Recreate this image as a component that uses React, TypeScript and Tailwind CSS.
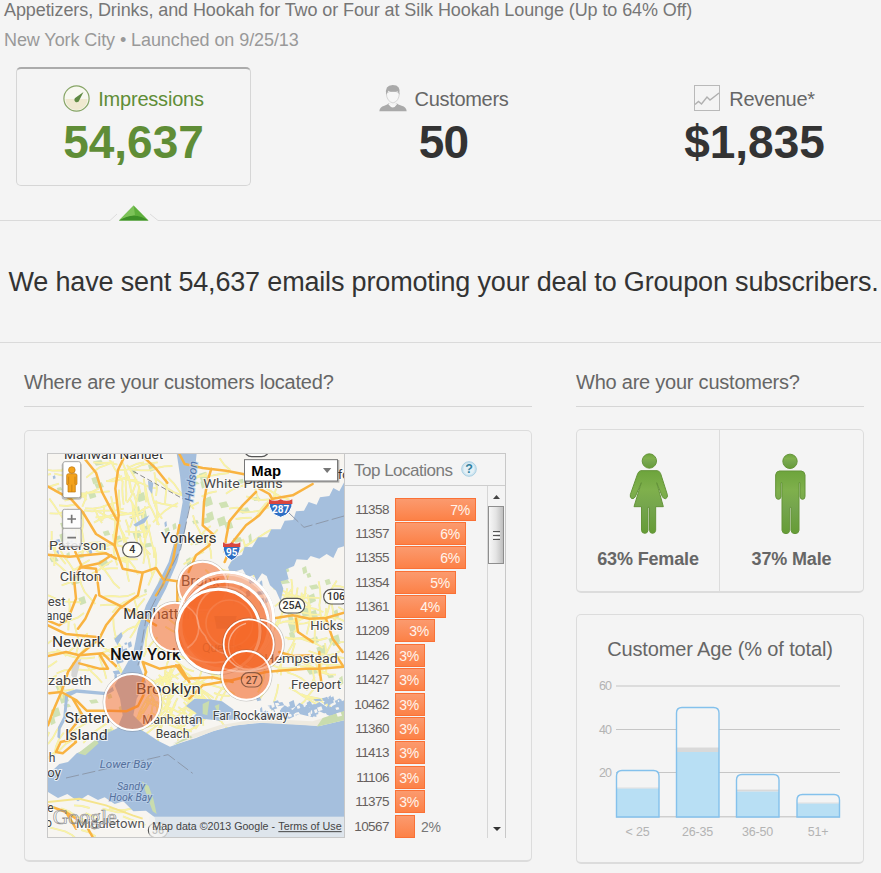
import React from "react";

const locations = [
  { zip: "11358", pct: 7, width: 81 },
  { zip: "11357", pct: 6, width: 71 },
  { zip: "11355", pct: 6, width: 71 },
  { zip: "11354", pct: 5, width: 61 },
  { zip: "11361", pct: 4, width: 51 },
  { zip: "11209", pct: 3, width: 40 },
  { zip: "11426", pct: 3, width: 30 },
  { zip: "11427", pct: 3, width: 30 },
  { zip: "10462", pct: 3, width: 30 },
  { zip: "11360", pct: 3, width: 30 },
  { zip: "11413", pct: 3, width: 30 },
  { zip: "11106", pct: 3, width: 30 },
  { zip: "11375", pct: 3, width: 30 },
  { zip: "10567", pct: 2, width: 20 },
];

const ages = [
  { label: "< 25", x: 0, top: 85, cap: 102.6, fill: 103.6 },
  { label: "26-35", x: 60, top: 22, cap: 62.5, fill: 67 },
  { label: "36-50", x: 120, top: 89, cap: 104.6, fill: 106.6 },
  { label: "51+", x: 180.5, top: 109, cap: 117.6, fill: 118.6 },
];

// Seeded generator so the street texture is the same on every load.
function rng(seed: number) {
  let s = seed;
  return () => {
    s = (s * 16807) % 2147483647;
    return s / 2147483647;
  };
}

function streets(seed: number, count: number, x0: number, y0: number, x1: number, y1: number, tilt: number) {
  const r = rng(seed);
  let d = "";
  for (let i = 0; i < count; i++) {
    let x = x0 + r() * (x1 - x0);
    let y = y0 + r() * (y1 - y0);
    let a = tilt + (r() > 0.5 ? Math.PI / 2 : 0) + (r() - 0.5) * 0.6;
    d += `M${x.toFixed(0)} ${y.toFixed(0)}`;
    const n = 2 + Math.floor(r() * 4);
    for (let k = 0; k < n; k++) {
      a += (r() - 0.5) * 0.6;
      x += Math.cos(a) * 24;
      y += Math.sin(a) * 24;
      d += `L${x.toFixed(0)} ${y.toFixed(0)}`;
    }
  }
  return d;
}

function patches(seed: number, count: number, x0: number, y0: number, x1: number, y1: number, size: number) {
  const r = rng(seed);
  let d = "";
  for (let i = 0; i < count; i++) {
    const x = x0 + r() * (x1 - x0);
    const y = y0 + r() * (y1 - y0);
    const w = size * (0.4 + r());
    const h = size * (0.4 + r());
    d += `M${x.toFixed(0)} ${y.toFixed(0)}l${w.toFixed(0)} ${(-h / 3).toFixed(0)}l${(w / 3).toFixed(0)} ${h.toFixed(0)}l${(-w).toFixed(0)} ${(h / 3).toFixed(0)}z`;
  }
  return d;
}

const yellowRoads =
  streets(11, 50, 10, 10, 400, 300, 1.3) +
  streets(23, 30, 10, 300, 330, 620, 1.2) +
  streets(37, 40, 190, 30, 330, 330, 1.45) +
  streets(41, 24, 430, 10, 700, 320, 1.2) +
  streets(53, 50, 300, 330, 560, 760, 0.5) +
  streets(67, 60, 300, 640, 520, 800, 0.6) +
  streets(71, 60, 640, 380, 890, 740, 0.15) +
  streets(83, 14, 10, 620, 220, 860, 0.9) +
  streets(97, 8, 10, 1050, 250, 1150, 0.4);

type LabelProps = {
  x: number;
  y: number;
  w: number;
  size?: number;
  color?: string;
  bold?: boolean;
  italic?: boolean;
  children: string;
};

function Place({ x, y, w, size = 41, color = "#333", bold, italic, children }: LabelProps) {
  return (
    <text
      x={x}
      y={y}
      fontSize={size * 1.07}
      fill={color}
      stroke={italic ? "#b9cfea" : "#fff"}
      strokeWidth={6}
      strokeOpacity={0.75}
      paintOrder="stroke"
      textLength={w}
      lengthAdjust="spacingAndGlyphs"
      fontWeight={bold ? 500 : 400}
      fontStyle={italic ? "italic" : "normal"}
    >
      {children}
    </text>
  );
}

function Route({ x, y, w, children }: { x: number; y: number; w: number; children: string }) {
  return (
    <g>
      <rect x={x - w / 2} y={y - 22} width={w} height={44} rx={22} fill="#fff" fillOpacity={0.85} stroke="#555" strokeWidth={3.5} />
      <text x={x} y={y + 11} fontSize={32} fill="#333" fontWeight={500} textAnchor="middle">{children}</text>
    </g>
  );
}

function Interstate({ x, y, w, children }: { x: number; y: number; w: number; children: string }) {
  const h = w / 2;
  return (
    <g>
      <path d={`M${x - h} ${y - 22}Q${x - h - 1} ${y + 18} ${x} ${y + 28}Q${x + h + 1} ${y + 18} ${x + h} ${y - 22}Z`} fill="#2f6fc4" stroke="#fff" strokeWidth={3} />
      <path d={`M${x - h} ${y - 12}V${y - 26}Q${x - h / 2} ${y - 17} ${x} ${y - 26}Q${x + h / 2} ${y - 17} ${x + h} ${y - 26}V${y - 12}Z`} fill="#d9463e" />
      <text x={x} y={y + 14} fontSize={30} fontWeight={700} fill="#fff" textAnchor="middle">{children}</text>
    </g>
  );
}

function Bubble({ x, y, r, o, s = 6, so = 1 }: { x: number; y: number; r: number; o: number; s?: number; so?: number }) {
  return (
    <g>
      <circle cx={x} cy={y} r={r + 4} fill="none" stroke="#555" strokeOpacity={0.28 * so} strokeWidth={3} />
      <circle cx={x} cy={y} r={r} fill="#f4692a" fillOpacity={o} stroke="#fff" strokeOpacity={so} strokeWidth={s} />
    </g>
  );
}

function CityMap() {
  return (
    <svg width="296" height="383" viewBox="6 6 888 1149" fontFamily="Roboto, sans-serif" className="block shrink-0">
      <rect x="6" y="6" width="888" height="1149" fill="#f7f5f1" />
      <path d={patches(5, 30, 10, 10, 380, 480, 18) + patches(9, 24, 700, 320, 880, 680, 20) + patches(15, 20, 420, 60, 620, 330, 18) + patches(19, 14, 10, 700, 240, 900, 18)} fill="#d0e2b4" />
      <path d={patches(77, 8, 20, 40, 360, 300, 12)} fill="#a5bfdd" />
      <path d={yellowRoads} fill="none" stroke="#e9e4b4" strokeWidth="5.5" strokeLinejoin="round" />
      <path d={yellowRoads} fill="none" stroke="#faf4a4" strokeWidth="4" strokeLinejoin="round" />

      <g fill="#a5bfdd">
        <path d="M896 88L880 118L862 108L850 132L822 136L812 158L788 150L774 176L750 178L742 204L716 206L704 232L676 232L664 256L636 256L618 286L596 284L588 308L562 318L546 346L552 362L590 352L604 376L624 368L632 388L648 364L662 372L672 400L690 416L704 448L712 410L704 388L728 382L720 352L744 342L752 322L784 324L794 312L820 320L842 306L862 318L876 288L896 282Z" />
        <path d="M392 4L452 4L446 60L432 150L418 230L394 330L360 410L328 470L302 530L288 600L280 640L300 690L272 740L262 790L300 828L214 828L230 790L222 740L206 700L240 640L262 600L276 530L300 460L338 390L368 330L396 230L410 150L402 70Z" />
        <path d="M6 968L40 936L66 930L92 904L128 890L152 862L182 844L220 826L262 820L300 842L336 866L372 884L404 872L450 858L500 838L570 820L650 812L730 815L820 822L896 804V1156H336L326 1096L300 1076L262 1078L232 1048L206 1056L176 1036L156 1044L126 1028L96 1048L64 1026L36 1038L6 1020Z" />
        <path d="M420 762L446 740L490 742L528 748L560 770L590 800L520 806L470 800L444 824L424 812L452 784Z" />
        <path d="M640 790L668 776L690 788L716 760L740 774L760 752L790 768L820 750L846 768L896 744V786L860 796L820 778L800 796L760 786L730 800L690 794L650 806Z" />
        <path d={patches(31, 46, 630, 735, 890, 790, 15) + patches(29, 12, 200, 560, 250, 680, 14) + patches(45, 10, 560, 380, 660, 450, 14)} />
        <path d="M58 722L90 712L180 720L200 704L204 716L180 730L92 722L66 736L60 800L44 830L42 860L34 856L36 826L52 794Z" />
        <path d="M262 218L290 200L310 190L296 212L270 224ZM306 86L322 92L318 126L308 112ZM206 560L226 540L230 552L214 580Z" />
      </g>
      <path d="M380 874L440 846L520 820L640 800L800 808L896 778V796L820 822L640 812L540 824L400 874Z" fill="#eeeae0" />
      <path d="M812 824L830 798L896 776V804ZM380 880L430 850L440 856ZM288 988L308 1002L322 1040L332 1086L320 1078L306 1040ZM96 904L150 862L158 874L118 910ZM470 756L490 746L484 790L470 786ZM506 762L520 756L518 786Z" fill="#c9dcae" />
      <path d={patches(64, 26, 630, 745, 880, 790, 10)} fill="#f7f5f1" />
      <path d="M78 632L106 620L88 690L76 670Z" fill="#d5d5d5" />

      <g fill="none" stroke="#f9b341" strokeWidth="7.5" strokeLinejoin="round" strokeLinecap="round">
        <path d="M116 20L150 62L168 120L194 170L214 206M232 20L216 54L208 110L218 190L206 280L230 350L290 362L330 348L352 382L394 388V450" />
        <path d="M6 104L76 142L110 180L150 246L206 280M6 308L70 314L180 304L210 320M196 310L160 334L104 346" />
        <path d="M298 20L330 50L364 92M400 220L380 330L350 400L330 430" />
        <path d="M400 6L416 36L470 48L540 56L610 70M496 50L484 90L474 150L470 220L500 246L490 280L450 310L428 360" />
        <path d="M630 120L590 160L550 208L540 260L536 300M800 96L740 130L680 140L640 190L600 220L560 270L536 330M640 110L670 126L690 160" />
        <path d="M88 300L106 340L84 380L90 440L66 500L40 520L6 506M104 346L150 350L160 430L186 444L240 470L296 500L330 520M150 430L118 500L96 530" />
        <path d="M290 362L276 430L220 470L180 520L160 560L100 610L66 660L46 720L20 780L6 820" />
        <path d="M6 520L60 546L120 552L160 556M6 612L60 600L100 610L170 604L210 642M160 606L186 650L160 650L100 634" />
        <path d="M10 724L46 720L90 744L122 776L190 776L240 778L276 762L292 730L290 690L300 660M80 740L110 790L70 840L90 870L50 904L30 900L44 870L80 862" />
        <path d="M300 660L290 630L340 650L400 640L430 690M390 640L420 680L500 676L560 690M430 740L470 700L560 684L660 660L700 656L780 650L820 650L894 644" />
        <path d="M690 498L740 490L790 500L840 498L894 482M700 600L740 612L800 610M840 500L860 560L890 600M750 500L756 540L800 570M820 600V650L826 690M870 610L890 640" />
        <path d="M6 1060L60 1080L120 1120L140 1155M60 1080L90 1130" />
      </g>
      <path d="M6 1050L100 1040L180 1060L260 1090L290 1100" fill="none" stroke="#f5e48c" strokeWidth="6" />
      <path d="M60 978L366 908L440 964M728 182L774 226L894 192M432 160L404 290L300 500L276 640" fill="none" stroke="#8d99ab" strokeWidth="3" strokeDasharray="40 10" />
      <path d="M262 58L410 140" fill="none" stroke="#777" strokeWidth="2.5" strokeDasharray="16 8" />

      <Place x={54} y={20} w={298} size={36}>Mahwah Nanuet</Place>
      <Place x={472} y={108} w={238} size={37} color="#4a4a4a">White Plains</Place>
      <g transform="rotate(-83 440 150)">
        <Place x={440} y={150} w={122} size={33} color="#4a70a8" italic>Hudson</Place>
      </g>
      <Place x={344} y={272} w={168}>Yonkers</Place>
      <Place x={9} y={294} w={172} size={37} color="#444">Paterson</Place>
      <Place x={41} y={388} w={126} size={38} color="#444">Clifton</Place>
      <Place x={5} y={462} w={54} size={36} color="#444">est</Place>
      <Place x={0} y={505} w={78} size={36} color="#444">ange</Place>
      <Place x={18} y={586} w={158} size={41}>Newark</Place>
      <Place x={232} y={501} w={214} size={42}>Manhattan</Place>
      <Place x={192} y={623} w={212} size={44} color="#111" bold>New York</Place>
      <Place x={6} y={699} w={130} size={36} color="#444">zabeth</Place>
      <Place x={270} y={726} w={194} size={42}>Brooklyn</Place>
      <Place x={56} y={814} w={136} size={41}>Staten</Place>
      <Place x={57} y={864} w={128} size={41}>Island</Place>
      <Place x={289} y={816} w={180} size={35} color="#444">Manhattan</Place>
      <Place x={329} y={858} w={101} size={35} color="#444">Beach</Place>
      <Place x={500} y={804} w={227} size={35} color="#444">Far Rockaway</Place>
      <Place x={735} y={710} w={150} size={38} color="#444">Freeport</Place>
      <Place x={655} y={634} w={220} size={37} color="#444">Hempstead</Place>
      <Place x={793} y={533} w={98} size={37} color="#444">Hicks</Place>
      <Place x={876} y={80} w={66} size={37}>ford</Place>
      <Place x={405} y={402} w={116} size={39} color="#444">Bronx</Place>
      <Place x={8} y={930} w={20} size={38} color="#444">h</Place>
      <Place x={4} y={976} w={41} size={37} color="#444">oy</Place>
      <Place x={4} y={1080} w={19} size={36} color="#444">e</Place>
      <Place x={-2} y={1124} w={20} size={36} color="#444">o</Place>
      <Place x={161} y={949} w={156} size={31} color="#55709c" italic>Lower Bay</Place>
      <Place x={213} y={1014} w={84} size={31} color="#55709c" italic>Sandy</Place>
      <Place x={189} y={1047} w={129} size={31} color="#55709c" italic>Hook Bay</Place>
      <Place x={90} y={1129} w={206} size={35} color="#555">Middletown</Place>
      <Route x={259} y={293} w={58}>4</Route>
      <Route x={738} y={461} w={76}>25A</Route>
      <Route x={870} y={434} w={74}>106</Route>
      <Route x={632} y={-8} w={74}>22</Route>
      <Route x={336} y={1135} w={58}>36</Route>
      <Interstate x={704} y={168} w={70}>287</Interstate>
      <Interstate x={557} y={297} w={52}>95</Interstate>

      <Bubble x={387} y={525} r={73} o={0.55} />
      <Bubble x={470} y={402} r={73} o={0.55} />
      <Bubble x={541} y={502} r={142} o={0.4} s={9} />
      <circle cx="541" cy="502" r="134" fill="none" stroke="#fff" strokeOpacity="0.35" strokeWidth="5" />
      <Bubble x={536} y={520} r={132} o={0.55} s={9} />
      <Bubble x={637} y={577} r={74} o={0.55} s={5} />
      <g transform="translate(517 537)">
        <circle r="131" fill="none" stroke="#555" strokeOpacity="0.3" strokeWidth="3" />
        <circle r="125" fill="#f56a2c" fillOpacity="0.9" stroke="#fff" strokeWidth="9" />
      </g>
      <g fill="none" stroke="#fff" strokeOpacity="0.22" strokeWidth="5">
        <path d="M424 464A73 73 0 0 1 424 588" />
        <path d="M600 430A84 84 0 0 0 478 552A84 84 0 0 0 540 606" />
        <circle cx="550" cy="514" r="70" strokeOpacity="0.1" />
        <path d="M404 590C450 650 580 650 640 560" strokeOpacity="0.15" />
      </g>
      <path d="M505 492H572L562 530H512Z" fill="#d65c28" fillOpacity="0.3" />
      <text x="468" y="600" fontSize="38" fill="#a03c10" fillOpacity="0.22" textLength="120">Queens</text>
      <Bubble x={608} y={577} r={75} o={0.75} s={5} />
      <path d="M590 646A70 70 0 0 1 600 514" fill="none" stroke="#fff" strokeOpacity="0.45" strokeWidth="4" />
      <Bubble x={601} y={670} r={73} o={0.6} />
      <path d="M532 650Q600 672 668 640" fill="none" stroke="#fff" strokeOpacity="0.3" strokeWidth="5" />
      <g opacity="0.75">
        <rect x="586" y="662" width="62" height="43" rx="21" fill="#f6a47e" stroke="#6a4634" strokeWidth="3.5" />
        <text x="617" y="695" fontSize="31" fill="#4a2b1b" fontWeight="500" textAnchor="middle">27</text>
      </g>
      <Bubble x={259} y={750} r={84} o={0.5} />

      <rect x="310" y="1094" width="586" height="64" fill="#f2f2f0" fillOpacity="0.75" />
      <text x="20" y="1117" fontSize="64" fontFamily="Liberation Serif, serif" fill="#fff" fillOpacity="0.55" stroke="#777" strokeOpacity="0.8" strokeWidth="2.2" textLength="192" lengthAdjust="spacingAndGlyphs">Google</text>
      <g fontFamily="Liberation Sans, Arial, sans-serif" fontSize="32" fill="#444">
        <text x="319" y="1134" textLength="368" lengthAdjust="spacingAndGlyphs">Map data ©2013 Google -</text>
        <text x="697" y="1134" textLength="190" lengthAdjust="spacingAndGlyphs">Terms of Use</text>
        <path d="M697 1139H887" stroke="#444" strokeWidth="3" />
      </g>

      <g>
        <rect x="47" y="32" width="60" height="111" rx="8" fill="#000" fillOpacity="0.22" />
        <rect x="51" y="29" width="53" height="108" rx="6" fill="#fff" stroke="#999" strokeWidth="2.5" />
        <path d="M62 70Q62 65 68 65H87Q93 65 93 70V96Q92 100 88 98V120H66V98Q62 100 62 96Z" fill="#f3a21b" stroke="#b97410" strokeWidth="2" />
        <path d="M77.500 98V120M68 74V96M87 74V96" stroke="#c47f14" strokeWidth="2.500" />
        <circle cx="77.500" cy="54" r="10" fill="#f3a21b" stroke="#b97410" strokeWidth="2" />
        <rect x="47" y="174" width="60" height="113" rx="6" fill="#000" fillOpacity="0.16" />
        <rect x="50" y="172" width="55" height="57" rx="5" fill="#fdfdfd" stroke="#999" strokeWidth="2.500" />
        <rect x="50" y="229" width="55" height="54" rx="5" fill="#fdfdfd" fillOpacity="0.85" stroke="#999" strokeWidth="2.500" />
        <path d="M64 201H90M77 188V214M64 257H90" stroke="#777" strokeWidth="5" />
      </g>
      <g>
        <rect x="594" y="24" width="286" height="68" fill="#000" fillOpacity="0.28" />
        <rect x="595.500" y="23" width="279" height="64" fill="#fff" stroke="#777" strokeWidth="3" />
        <text x="616" y="71" fontSize="42" fontWeight="700" fontFamily="Liberation Sans, Arial, sans-serif" fill="#000" textLength="89" lengthAdjust="spacingAndGlyphs">Map</text>
        <path d="M831 48H856L843.500 63Z" fill="#777" />
      </g>
    </svg>
  );
}

function TopLocations() {
  return (
    <div className="flex flex-1 flex-col border-l border-[#c8c8c8]">
      <div className="flex h-[32px] items-center border-b border-[#cdcdcd] pl-[9px]">
        <span className="pt-[2px] text-[17px] leading-none tracking-[-0.5px] text-[#7b7b7b]">Top Locations</span>
        <svg className="ml-[9px]" width="16" height="16" viewBox="0 0 16 16">
          <circle cx="8" cy="8" r="7.300" fill="#cfe5f0" stroke="#a9cfe2" />
          <circle cx="8" cy="8" r="5.500" fill="#e4f0f6" />
          <text x="8" y="12.300" fontSize="12.500" fontWeight="700" fill="#31809e" textAnchor="middle">?</text>
        </svg>
      </div>
      <div className="flex flex-1">
        <div className="-mb-[1px] flex-1 pt-[11.6px]">
          {locations.map((l) => (
            <div key={l.zip} className="flex h-[24.4px] items-start">
              <span className="w-[44px] text-right text-[13.5px] leading-[24.8px] tracking-[-0.55px] text-[#66615e]">{l.zip}</span>
              <div
                style={{ width: l.width }}
                className="ml-[6px] flex h-[23px] shrink-0 items-center justify-end border border-[#fa7136] bg-linear-to-b from-[#fb9a6e] to-[#fc8146] pr-[5px]"
              >
                {l.pct > 2 && <span className="pt-px text-[14px] leading-none tracking-[-0.3px] text-[#fff4ec]">{l.pct}%</span>}
              </div>
              {l.pct === 2 && <span className="ml-[6px] text-[14px] leading-[25px] tracking-[-0.3px] text-[#777]">2%</span>}
            </div>
          ))}
        </div>
        <div className="flex w-[18px] flex-col items-center border-l border-[#d6d6d6]">
          <div className="flex h-[20.500px] items-center pt-px">
            <svg width="7" height="4" viewBox="0 0 7 4"><path d="M0 4L3.500 0L7 4Z" fill="#444" /></svg>
          </div>
          <div className="flex h-[58px] w-[16px] flex-col items-center justify-center gap-[1px] self-start border border-[#8e8e8e] bg-linear-to-r from-[#f7f7f7] via-[#e4e4e4] to-[#bfbfbf]">
            <div className="h-px w-[7px] bg-[#555]" />
            <div className="h-px w-[7px] bg-white" />
            <div className="h-px w-[7px] bg-[#555]" />
            <div className="h-px w-[7px] bg-white" />
            <div className="h-px w-[7px] bg-[#555]" />
          </div>
          <div className="mt-auto flex h-[19px] items-center">
            <svg width="8" height="4" viewBox="0 0 8 4"><path d="M0 0H8L4 4Z" fill="#333" /></svg>
          </div>
        </div>
      </div>
    </div>
  );
}

function FemaleIcon() {
  return (
    <svg className="ml-[2px]" width="42" height="84" viewBox="189 96 126 252">
      <defs>
        <linearGradient id="body" x1="0" y1="0" x2="0" y2="1">
          <stop offset="0" stopColor="#6da43c" />
          <stop offset="0.3" stopColor="#7fb04c" />
          <stop offset="0.6" stopColor="#74a44d" />
          <stop offset="1" stopColor="#659c35" />
        </linearGradient>
      </defs>
      <g fill="url(#body)" stroke="#649439" strokeWidth="3" strokeLinejoin="round">
        <circle cx="253" cy="123" r="21.500" />
        <path d="M228 152H277Q284 153 287 161L307 224Q309 233 302 236Q295 236 292 230L275 188L295 260H272V331Q271 340 262.500 340Q254 340 253.500 331V262H249V331Q248 340 239.500 340Q230 340 229.500 331V260H207L229 188L211 230Q208 236 201 236Q194 233 196 224L218 161Q221 153 228 152Z" />
      </g>
    </svg>
  );
}

function MaleIcon() {
  return (
    <svg className="mr-[3px]" width="42" height="84" viewBox="612 96 126 252">
      <g fill="url(#body)" stroke="#649439" strokeWidth="3" strokeLinejoin="round">
        <circle cx="675" cy="124" r="21.500" />
        <path d="M643 153H709Q719 154 720 165V229Q720 238 713 238Q706 238 705 230V188H702V331Q701 341 690 341Q679 341 678 331V262H674V331Q673 341 663 341Q652 341 651 331V188H648V230Q647 238 640 238Q633 238 632 229V165Q633 154 643 153Z" />
      </g>
    </svg>
  );
}

function AgeChart() {
  return (
    <svg className="block overflow-visible" width="264" height="160" viewBox="-22 0 264 160" fontSize="12.5" fill="#b3b3b3">
      <rect x="0" y="0" width="224" height="2" fill="#dcdcdc" />
      <rect x="0" y="44" width="224" height="1" fill="#c6c6c6" />
      <rect x="0" y="87" width="224" height="1" fill="#c6c6c6" />
      <rect x="0" y="131" width="224" height="1.500" fill="#cfcfcf" />
      <text x="-17" y="5" textLength="13">60</text>
      <text x="-17" y="49" textLength="13">40</text>
      <text x="-17" y="92" textLength="13">20</text>
      {ages.map((a) => (
        <g key={a.label}>
          <path d={`M${a.x + 0.5} 132V${a.top + 6}Q${a.x + 0.5} ${a.top + 0.5} ${a.x + 6} ${a.top + 0.5}H${a.x + 37.5}Q${a.x + 43} ${a.top + 0.5} ${a.x + 43} ${a.top + 6}V132Z`} fill="#f4f4f4" />
          <rect x={a.x + 0.5} y={a.cap} width={42.5} height={a.fill - a.cap} fill="#d9d9d9" />
          <rect x={a.x + 0.5} y={a.fill} width={42.5} height={132 - a.fill} fill="#b8dff4" />
          <path d={`M${a.x + 0.5} 132V${a.top + 6}Q${a.x + 0.5} ${a.top + 0.5} ${a.x + 6} ${a.top + 0.5}H${a.x + 37.5}Q${a.x + 43} ${a.top + 0.5} ${a.x + 43} ${a.top + 6}V132Z`} fill="none" stroke="#84c1ec" strokeWidth="1.400" />
          <text x={a.x + 21.5} y="151" textAnchor="middle" letterSpacing="-0.2">{a.label}</text>
        </g>
      ))}
    </svg>
  );
}

export default function App() {
  return (
    <div className="flex h-[873px] w-[881px] flex-col overflow-hidden bg-[#f4f4f4] font-['Liberation_Sans',Arial,sans-serif] whitespace-nowrap">
      <header className="h-[67px] pl-[4px] text-[18px]">
        <h1 className="h-[20px] leading-[20px] tracking-[-0.09px] text-[#767676]">
          Appetizers, Drinks, and Hookah for Two or Four at Silk Hookah Lounge (Up to 64% Off)
        </h1>
        <p className="mt-[10px] h-[20px] leading-[20px] tracking-[-0.08px] text-[#999]">New York City • Launched on 9/25/13</p>
      </header>

      <nav className="flex h-[119px] gap-[75px] pl-[16px]">
        <div className="flex w-[235px] flex-col items-center rounded-[5px] border border-t-2 border-[#d6d6d6] border-t-[#ababab] pt-[15px]">
          <div className="flex h-[28px] items-center gap-[8px]">
            <svg width="27" height="27" viewBox="0 0 27 27">
              <circle cx="13.500" cy="13.500" r="12.600" fill="#f7f8f0" stroke="#87a566" strokeWidth="1.200" />
              <path d="M2.500 14H24.500A11 11 0 0 1 2.500 14Z" fill="#efe9d0" />
              <path d="M20.500 7L16.300 15.300A2.500 2.500 0 1 1 12.800 12.500Z" fill="#5f8a43" />
            </svg>
            <span className="pt-[2px] text-[20px] leading-none tracking-[-0.2px] text-[#5f8d36]">Impressions</span>
          </div>
          <strong className="mt-[7px] text-[46px] leading-[46px] text-[#5f8d36]">54,637</strong>
        </div>
        <div className="flex w-[235px] flex-col items-center pt-[17px]">
          <div className="flex h-[28px] items-center gap-[8px]">
            <svg width="28" height="28" viewBox="0 0 84 84">
              <path d="M1 82Q2 68 16 65Q26 62 30 57Q40 78 52 57Q56 62 68 65Q82 68 83 82Z" fill="#a9a9a9" />
              <path d="M30 57Q41 74 52 57L54 61Q42 80 28 61Z" fill="#f8f8f8" />
              <path d="M22 28Q23 52 42 57Q60 52 61 28Q42 14 22 28Z" fill="#f6f6f6" stroke="#c4c4c4" strokeWidth="2" />
              <path d="M22 32Q16 4 41 3Q67 3 61 32L56 22Q40 26 28 20Z" fill="#a9a9a9" />
            </svg>
            <span className="pt-[2px] text-[20px] leading-none tracking-[-0.3px] text-[#666]">Customers</span>
          </div>
          <strong className="mt-[7px] text-[46px] leading-[46px] tracking-[-0.8px] text-[#333]">50</strong>
        </div>
        <div className="ml-px flex w-[235px] flex-col items-center pt-[17px]">
          <div className="flex h-[28px] items-center gap-[9px]">
            <svg width="26" height="26" viewBox="0 0 26 26" fill="none">
              <rect x="0.500" y="0.500" width="25" height="25" stroke="#b9b9b9" />
              <path d="M1 19.500L4.500 16.500L7.500 19L13 12L16 15L25 8" stroke="#b0b0b0" strokeWidth="1.400" />
            </svg>
            <span className="pt-[2px] text-[20px] leading-none tracking-[-0.3px] text-[#666]">Revenue*</span>
          </div>
          <strong className="mt-[7px] text-[46px] leading-[46px] text-[#333]">$1,835</strong>
        </div>
      </nav>

      <div className="flex h-[35px] items-end">
        <div className="h-px w-[110px] bg-[#dadada]" />
        <svg className="block" width="48" height="16" viewBox="0 0 48 16">
          <path d="M0 15.500L7 9M48 15.500L40 9" stroke="#dcdcdc" />
          <path d="M23.700 0.500L38.500 15.500H9Z" fill="#5eaf3c" />
          <path d="M23.700 0.500L25 10Q16 12 9 15.500Z" fill="#7cc258" />
          <path d="M9 15.500Q24 6 38.500 15.500Z" fill="#3d8f27" />
        </svg>
        <div className="h-px flex-1 bg-[#dadada]" />
      </div>

      <div className="flex h-[122px] items-center border-b border-[#dadada] pt-[2px] pl-[8.500px]">
        <h2 className="text-[27px] leading-none tracking-[-0.17px] text-[#333]">
          We have sent 54,637 emails promoting your deal to Groupon subscribers.
        </h2>
      </div>

      <main className="flex gap-[44px] pl-[24px]">
        <section className="w-[508px]">
          <h3 className="flex h-[64px] items-end border-b border-[#d6d6d6] pb-[13px] text-[20px] leading-[22px] tracking-[-0.22px] text-[#666]">
            Where are your customers located?
          </h3>
          <div className="mt-[23px] h-[432px] rounded-[5px] border border-b-2 border-[#dcdcdc] pt-[22px] pl-[22px]">
            <div className="flex h-[385px] w-[459px] border border-b-0 border-[#c8c8c8]">
              <div className="border-b-2 border-[#c8c8c8]">
                <CityMap />
              </div>
              <TopLocations />
            </div>
          </div>
        </section>

        <section className="w-[288px]">
          <h3 className="flex h-[64px] items-end border-b border-[#d6d6d6] pb-[13px] text-[20px] leading-[22px] tracking-[-0.23px] text-[#666]">
            Who are your customers?
          </h3>
          <div className="mt-[22px] flex h-[164px] rounded-[5px] border border-b-2 border-[#dcdcdc] text-[18px] font-bold tracking-[-0.15px] text-[#666]">
            <div className="flex w-[143px] flex-col items-center border-r border-[#dcdcdc] pt-[22px]">
              <FemaleIcon />
              <span className="mt-[13px] leading-[20px]">63% Female</span>
            </div>
            <div className="flex flex-1 flex-col items-center pt-[22px]">
              <MaleIcon />
              <span className="mt-[13px] leading-[20px]">37% Male</span>
            </div>
          </div>
          <div className="mt-[21px] h-[250px] rounded-[5px] border border-b-2 border-[#dcdcdc]">
            <h4 className="mt-[23px] text-center text-[20px] leading-[22px] tracking-[-0.13px] text-[#666]">Customer Age (% of total)</h4>
            <div className="mt-[25px] pl-[17px]">
              <AgeChart />
            </div>
          </div>
        </section>
      </main>
    </div>
  );
}
